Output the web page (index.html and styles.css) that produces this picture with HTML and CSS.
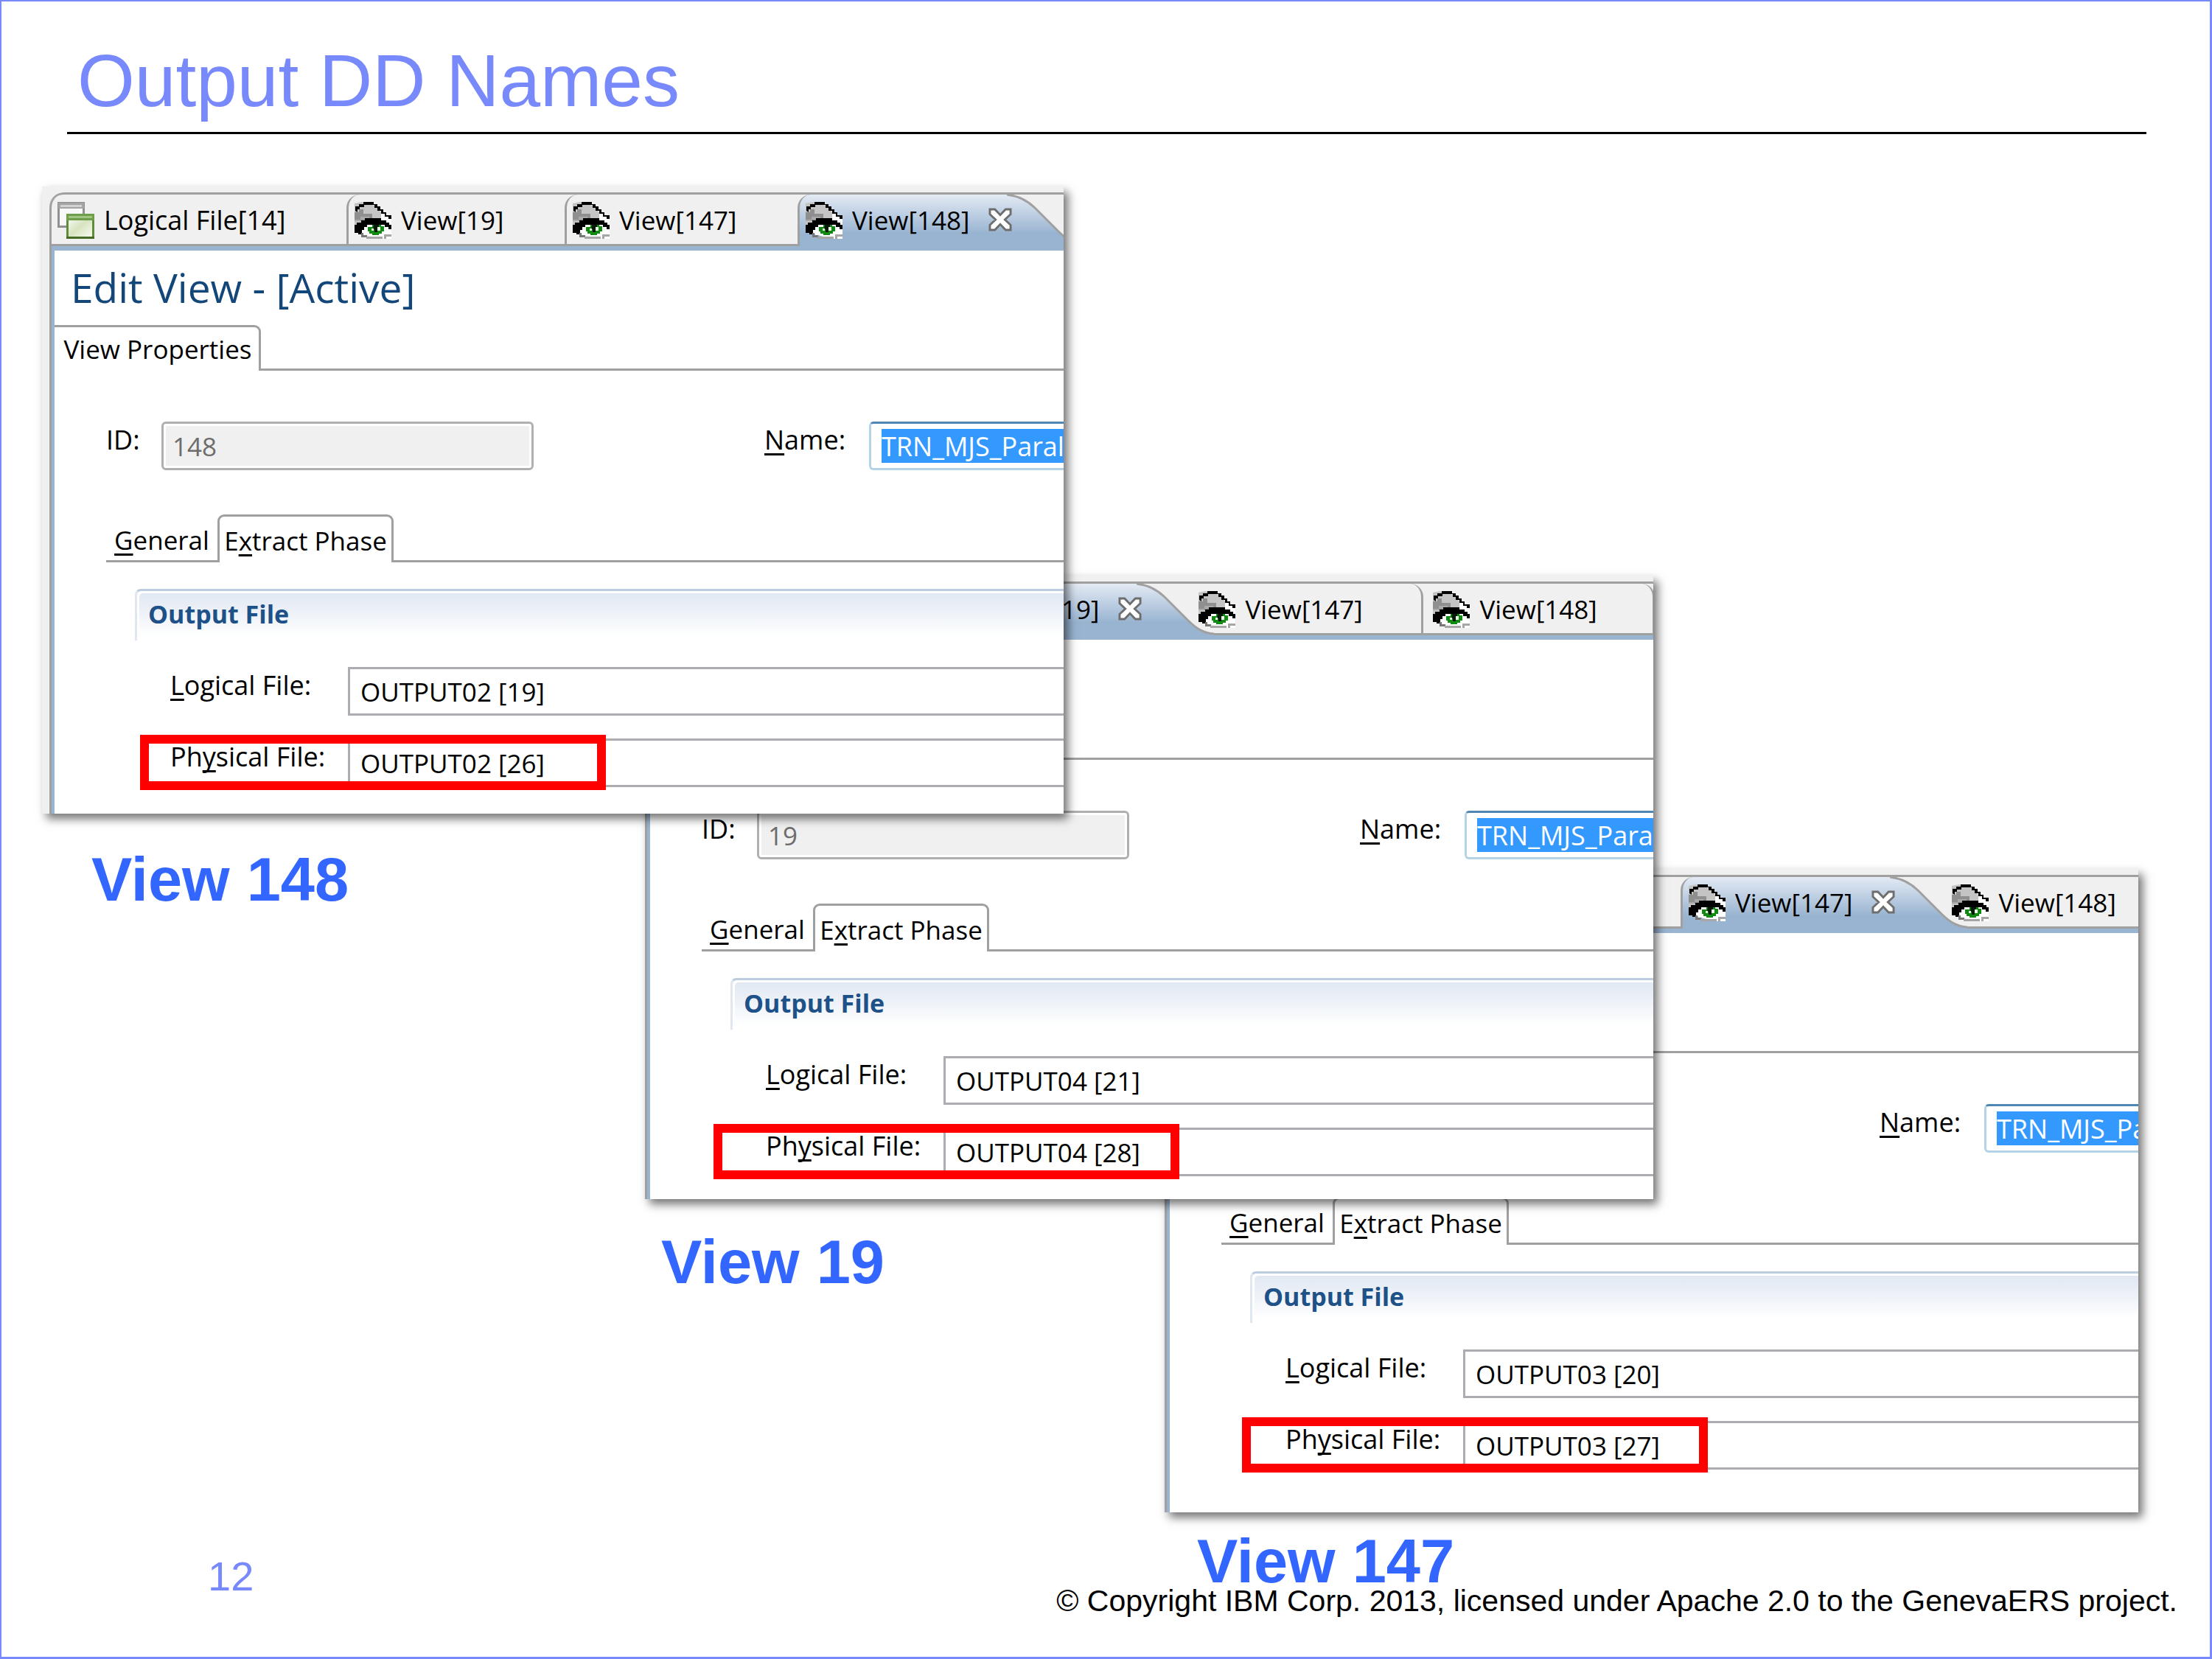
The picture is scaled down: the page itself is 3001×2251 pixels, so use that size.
FILE: index.html
```html
<!DOCTYPE html>
<html lang="en">
<head>
<meta charset="utf-8">
<title>Output DD Names</title>
<link rel="stylesheet" href="styles.css">
</head>
<body>
<svg class="defs" aria-hidden="true">
  <defs>
    <linearGradient id="tab-fill" x1="0" y1="0" x2="0" y2="1">
      <stop offset="0" stop-color="#e3eaf4"/><stop offset="0.75" stop-color="#99b4d1"/><stop offset="1" stop-color="#99b4d1"/>
    </linearGradient>
    <linearGradient id="win-green" x1="0" y1="0" x2="1" y2="1">
      <stop offset="0" stop-color="#ffffff"/><stop offset="0.5" stop-color="#d5e4c0"/><stop offset="1" stop-color="#fafcf4"/>
    </linearGradient>
    <symbol id="eye" viewBox="0 0 50 50">
      <path d="M3 4H28L50 24V50H38L20 46L4 40Z" fill="#fff"/>
      <path d="M0 2L10 0L28 5L36 14V24H22L0 32Z" fill="#c4c4c4"/>
      <path d="M0 14H6V10H12V16H24V22H14V26H0Z" fill="#8f8f8f"/>
      <path d="M0 26H8V20H20V24H0Z" fill="#a9a9a9"/>
      <path d="M1 12V6H6V3H12V0H26V3H31V6H35V10H39V14H43V18H50V23H46V20H41V16H36V12H31V8H27V4H13V7H7V10H4V14Z" fill="#000"/>
      <path d="M0 42V31H3V28H9V25H14V22H36V25H43V28H47V31H50V37H46V34H41V31H17V34H13V38H10V44H5V42Z" fill="#000"/>
      <path d="M9 42H12V45H17V48H9Z" fill="#777"/>
      <path d="M13 36H18V45H13Z" fill="#fff"/>
      <path d="M18 34H24V31H36V33H40V40H37V43H33V45H24V43H20V40H18Z" fill="#118a11"/>
      <path d="M26 31H33V37H31V41H27V37H25Z" fill="#061806"/>
      <path d="M31 34H35V39H31ZM23 36H26V39H23Z" fill="#e9f7e4"/>
      <path d="M16 47H38V50H16ZM40 44H50V47H43V50H40Z" fill="#a6a6a6"/>
    </symbol>
    <symbol id="files" viewBox="0 0 50 50">
      <rect x="1.500" y="1.500" width="34" height="32" fill="#f8f8f8" stroke="#909090" stroke-width="3"/>
      <path d="M1 1H36V9H1Z" fill="#a4a4a4"/><path d="M4 4H33V7H4Z" fill="#d2d2d2"/>
      <rect x="13.500" y="17.500" width="35" height="31" fill="url(#win-green)" stroke="#5f8d3c" stroke-width="3"/>
      <path d="M12 16H50V25H12Z" fill="#6f9e4b"/><path d="M15 19H47V22H15Z" fill="#a3c583"/>
      <path d="M12 47H50V50H12Z" fill="#456a24"/>
    </symbol>
    <symbol id="close" viewBox="0 0 33 33">
      <path d="M2 2H9L16.500 10L24 2H31V9L23 16.500L31 24V31H24L16.500 23L9 31H2V24L10 16.500L2 9Z" fill="#fff" stroke="#6e6e6e" stroke-width="3"/>
    </symbol>
    <symbol id="swoosh" viewBox="0 0 105 70">
      <path d="M0 0C16 2 28 8 38 18L70 50C82 62 92 67 105 68V70H0Z" fill="url(#tab-fill)"/>
      <path d="M0 0C16 2 28 8 38 18L70 50C82 62 92 67 105 68" fill="none" stroke="#a0a0a0" stroke-width="3"/>
    </symbol>
  </defs>
</svg>

<main class="slide">
  <header class="slide-header"><h1>Output DD Names</h1></header>

  <div class="canvas">
    <figure class="shot shot-148">
      <div class="window">
        <div class="tabbar">
          <div class="tab tab-files"><svg class="icon"><use href="#files"/></svg><button type="button">Logical File[14]</button></div>
          <div class="tab tab-short"><svg class="icon"><use href="#eye"/></svg><button type="button">View[19]</button></div>
          <div class="tab tab-long"><svg class="icon"><use href="#eye"/></svg><button type="button">View[147]</button></div>
          <div class="tab tab-active"><svg class="icon"><use href="#eye"/></svg><button type="button">View[148]</button><button type="button" class="close" aria-label="Close"><svg><use href="#close"/></svg></button></div>
          <svg class="swoosh"><use href="#swoosh"/></svg>
        </div>
        <div class="editor">
          <h2>Edit View - [Active]</h2>
          <div class="subtabs"><button type="button" class="properties">View Properties</button><span class="line"></span></div>
          <div class="identity">
            <label for="id-148">ID:</label><input id="id-148" class="id-field" value="148" disabled>
            <label for="name-148" class="name-label"><u>N</u>ame:</label>
            <div class="name-field"><input id="name-148" value="TRN_MJS_Parallel"></div>
          </div>
          <div class="phases"><button type="button" class="general"><u>G</u>eneral</button><button type="button" class="extract">E<u>x</u>tract Phase</button><span class="line"></span></div>
          <h3>Output File</h3>
          <div class="row"><label for="lf-148"><u>L</u>ogical File:</label><select id="lf-148"><option>OUTPUT02 [19]</option></select></div>
          <div class="row physical"><label for="pf-148">Ph<u>y</u>sical File:</label><select id="pf-148"><option>OUTPUT02 [26]</option></select><span class="marker"></span></div>
        </div>
      </div>
      <figcaption>View 148</figcaption>
    </figure>

    <figure class="shot shot-19">
      <div class="window">
        <div class="tabbar">
          <div class="tab tab-active"><svg class="icon"><use href="#eye"/></svg><button type="button">View[19]</button><button type="button" class="close" aria-label="Close"><svg><use href="#close"/></svg></button></div>
          <svg class="swoosh"><use href="#swoosh"/></svg>
          <div class="tab tab-after"><svg class="icon"><use href="#eye"/></svg><button type="button">View[147]</button></div>
          <div class="tab tab-last"><svg class="icon"><use href="#eye"/></svg><button type="button">View[148]</button></div>
        </div>
        <div class="editor">
          <div class="heading-space"></div>
          <div class="subtabs"><span class="line"></span></div>
          <div class="identity">
            <label for="id-19">ID:</label><input id="id-19" class="id-field" value="19" disabled>
            <label for="name-19" class="name-label"><u>N</u>ame:</label>
            <div class="name-field"><input id="name-19" value="TRN_MJS_Parallel"></div>
          </div>
          <div class="phases"><button type="button" class="general"><u>G</u>eneral</button><button type="button" class="extract">E<u>x</u>tract Phase</button><span class="line"></span></div>
          <h3>Output File</h3>
          <div class="row"><label for="lf-19"><u>L</u>ogical File:</label><select id="lf-19"><option>OUTPUT04 [21]</option></select></div>
          <div class="row physical"><label for="pf-19">Ph<u>y</u>sical File:</label><select id="pf-19"><option>OUTPUT04 [28]</option></select><span class="marker"></span></div>
        </div>
      </div>
      <figcaption>View 19</figcaption>
    </figure>

    <figure class="shot shot-147">
      <div class="window">
        <div class="tabbar">
          <div class="tab tab-active"><svg class="icon"><use href="#eye"/></svg><button type="button">View[147]</button><button type="button" class="close" aria-label="Close"><svg><use href="#close"/></svg></button></div>
          <svg class="swoosh"><use href="#swoosh"/></svg>
          <div class="tab tab-after"><svg class="icon"><use href="#eye"/></svg><button type="button">View[148]</button></div>
        </div>
        <div class="editor">
          <div class="heading-space"></div>
          <div class="subtabs"><span class="line"></span></div>
          <div class="identity">
            <label for="name-147" class="name-label"><u>N</u>ame:</label>
            <div class="name-field"><input id="name-147" value="TRN_MJS_Parallel"></div>
          </div>
          <div class="phases"><button type="button" class="general"><u>G</u>eneral</button><button type="button" class="extract">E<u>x</u>tract Phase</button><span class="line"></span></div>
          <h3>Output File</h3>
          <div class="row"><label for="lf-147"><u>L</u>ogical File:</label><select id="lf-147"><option>OUTPUT03 [20]</option></select></div>
          <div class="row physical"><label for="pf-147">Ph<u>y</u>sical File:</label><select id="pf-147"><option>OUTPUT03 [27]</option></select><span class="marker"></span></div>
        </div>
      </div>
      <figcaption>View 147</figcaption>
    </figure>
  </div>

  <footer class="slide-footer">
    <span class="page-number">12</span>
    <span class="copyright">© Copyright IBM Corp. 2013, licensed under Apache 2.0 to the GenevaERS project.</span>
  </footer>
</main>
</body>
</html>
```
FILE: styles.css
```css
* { box-sizing: border-box; }

body {
  margin: 0;
  background: #fff;
  font-family: "Liberation Sans", Arial, sans-serif;
}

.defs { position: absolute; width: 0; height: 0; }

/* Slide frame */
.slide {
  display: flex;
  flex-direction: column;
  min-height: 100vh;
  border: 3px solid #7889fb;
  border-width: 2px 3px 3px 2px;
}

.slide-header {
  margin: 0 86px 0 89px;
  padding: 50px 14px 12px;
  border-bottom: 3px solid #000;
}

h1 {
  margin: 0;
  font-size: 100px;
  line-height: 115px;
  font-weight: 400;
  color: #7889fb;
}

.canvas { position: relative; flex: 1; }

.slide-footer {
  display: flex;
  align-items: flex-end;
  justify-content: space-between;
  padding: 0 44px 52px 280px;
  position: relative;
  z-index: 4;
}

.page-number {
  font-size: 56px;
  line-height: 64px;
  padding-bottom: 25px;
  color: #7889fb;
}

.copyright { font-size: 41px; line-height: 48px; color: #000; }

/* Overlapping windows with their captions */
.shot { position: absolute; margin: 0; }
.shot-148 { left: 55px; top: 71px; width: 1386px; z-index: 3; }
.shot-19 { left: 873px; top: 599px; width: 1368px; z-index: 2; }
.shot-147 { left: 1578px; top: 997px; width: 1321px; z-index: 1; }

figcaption {
  font-size: 83px;
  line-height: 96px;
  font-weight: 700;
  color: #3366ff;
}
.shot-148 figcaption { padding: 42px 0 0 67px; }
.shot-19 figcaption { padding: 38px 0 0 22px; }
.shot-147 figcaption { padding: 19px 0 0 44px; }

.window {
  padding-top: 8px;
  overflow: hidden;
  background: #f0f0f0;
  box-shadow: 6px 7px 12px rgba(0, 0, 0, 0.55);
  font-family: "Open Sans", "Noto Sans", sans-serif;
  font-size: 36px;
  color: #000;
}
.shot-148 .window { padding-left: 10px; }

/* Editor tabs */
.tabbar {
  display: flex;
  height: 73px;
  border-top: 3px solid #a0a0a0;
  background: linear-gradient(#a0a0a0, #a0a0a0) bottom / 100% 3px no-repeat #f0f0f0;
}
.shot-148 .tabbar { border-top-left-radius: 20px; }
.shot-19 .tabbar { padding-left: 403px; }
.shot-147 .tabbar { padding-left: 700px; }

.tab {
  display: flex;
  flex: none;
  align-items: center;
  gap: 13px;
  position: relative;
  z-index: 1;
  padding: 0 8px;
  border-left: 3px solid #a0a0a0;
  border-top-left-radius: 18px;
}
.tab-files { width: 403px; }
.tab-short { width: 296px; }
.tab-long { width: 316px; }
.tab-active {
  padding-right: 0;
  background: linear-gradient(#e3eaf4, #99b4d1 75%) left / calc(100% - 8px) 100% no-repeat;
}
.tab-after {
  width: 316px;
  margin-left: -32px;
  border-left-color: transparent;
  border-right: 3px solid #a0a0a0;
  border-radius: 0 18px 0 0;
}
.shot-147 .tab-after { border-right: 0; }
.tab-last {
  width: 314px;
  border-left: 0;
  padding-left: 13px;
  border-right: 3px solid #a0a0a0;
  border-radius: 0 18px 0 0;
}

button {
  margin: 0;
  padding: 0;
  border: 0;
  background: none;
  color: inherit;
  font: inherit;
  white-space: nowrap;
}
.tab button { font-size: 35px; line-height: 46px; }
.tab-files button { font-size: 36px; }

.icon { flex: none; width: 50px; height: 50px; }
.tab .close { width: 32px; height: 32px; margin: 0 1px 2px 13px; line-height: 0; }
.close svg { width: 32px; height: 32px; }
.swoosh { flex: none; width: 105px; height: 70px; margin-left: -8px; }

/* Editor body */
.editor {
  border-top: 6px solid #99b4d1;
  border-left: 4px solid #99b4d1;
  box-shadow: -3px 0 0 #a0a0a0;
  margin-left: 3px;
  background: #fff;
}
.shot-148 .editor { padding-bottom: 36px; }
.shot-19 .editor { padding-bottom: 31px; }
.shot-147 .editor { padding-bottom: 58px; }

h2 {
  margin: 0;
  padding: 13px 0 15px 22px;
  font-size: 55px;
  line-height: 73px;
  font-weight: 400;
  color: #134679;
}
.heading-space { height: 101px; }

.subtabs, .phases { display: flex; }
.subtabs { height: 62px; }
.line { flex: 1; border-bottom: 3px solid #a0a0a0; }
.properties {
  width: 280px;
  padding-left: 3px;
  border-top: 3px solid #a0a0a0;
  border-right: 3px solid #a0a0a0;
  border-top-right-radius: 9px;
  font-size: 35px;
}

.identity {
  display: grid;
  grid-template-columns: 75px 505px 313px 142px 1fr;
  height: 66px;
  margin-top: 69px;
  padding-left: 70px;
}
.identity .name-label { grid-column: 4; }
.name-field { grid-column: 5; }

label { line-height: 50px; }
u { text-underline-offset: 5px; text-decoration-thickness: 3px; text-decoration-skip-ink: none; }

input {
  min-width: 0;
  width: 100%;
  margin: 0;
  border: 0;
  border-radius: 0;
  font: inherit;
}
.id-field {
  padding: 0 12px;
  border: 3px solid #b0b0b0;
  border-radius: 6px;
  background: #f0f0f0;
  box-shadow: inset 0 0 0 3px #fff;
  color: #6d6d6d;
  font-size: 35px;
}
.name-field {
  padding: 7px 0 7px 14px;
  border: 3px solid #b5d3e7;
  border-top-color: #4f86b4;
  border-right: 0;
  border-radius: 6px 0 0 6px;
}
.name-field input {
  display: block;
  height: 46px;
  padding: 0;
  background: #3399ff;
  color: #fff;
  font-size: 36px;
}

.phases { height: 65px; margin: 60px 0 36px 70px; font-size: 35px; }
.general { width: 151px; border-bottom: 3px solid #a0a0a0; padding-top: 6px; }
.extract {
  width: 239px;
  padding-top: 3px;
  border: 3px solid #a0a0a0;
  border-bottom: 0;
  border-radius: 9px 9px 0 0;
}

h3 {
  margin: 0 0 36px 109px;
  height: 70px;
  padding-left: 15px;
  border-top: 3px solid #bccde0;
  border-left: 3px solid #dfe7f1;
  border-top-left-radius: 8px;
  background: linear-gradient(#dfe7f1, #f3f6fb 60%, #fff 90%);
  box-shadow: inset 3px 3px 0 #fff;
  font-size: 34px;
  line-height: 62px;
  font-weight: 700;
  color: #1d5187;
}

.row {
  display: grid;
  grid-template-columns: 241px 1fr;
  position: relative;
  height: 66px;
  padding-left: 157px;
}
.physical { margin-top: 31px; }

select {
  appearance: none;
  margin: 0;
  padding: 0 14px;
  border: 3px solid #abadb3;
  border-right: 0;
  border-radius: 0;
  background: #fff;
  color: #000;
  font: inherit;
  font-size: 35px;
}

.marker {
  position: absolute;
  top: -5px;
  left: 116px;
  width: 632px;
  height: 75px;
  border: 12px solid #ff0000;
}
.shot-19 .marker { left: 86px; }
.shot-147 .marker { left: 98px; }
```
